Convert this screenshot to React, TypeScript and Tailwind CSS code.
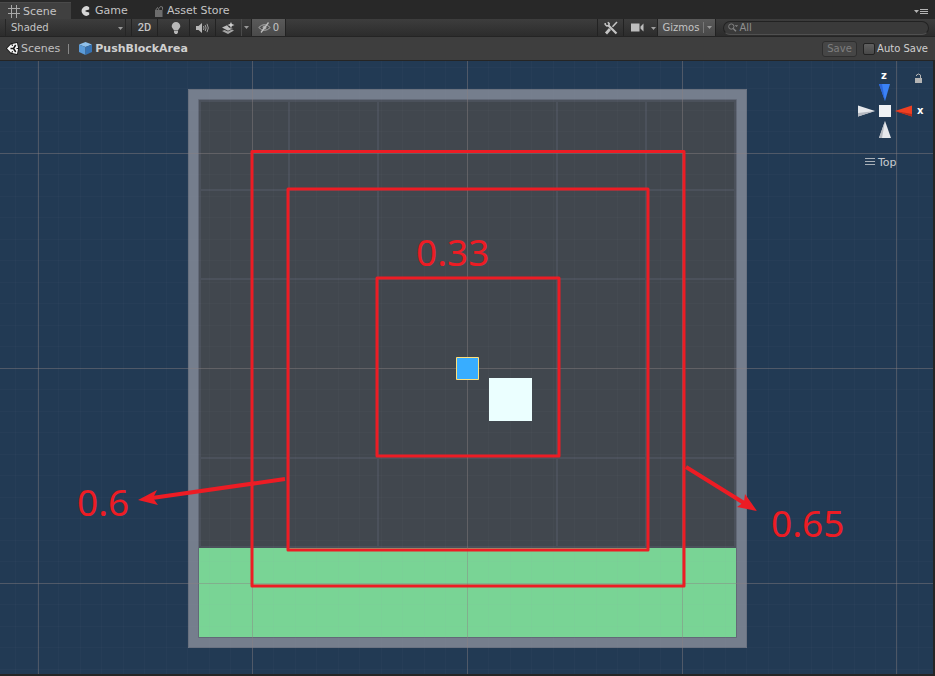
import type { ReactNode } from "react";

const MINOR_X = Array.from({ length: 44 }, (_, i) => 467.5 + (i - 21) * 21.5);
const MINOR_Y = Array.from({ length: 29 }, (_, i) => 368.5 + (i - 14) * 21.5);

function Caret({ className = "" }: { className?: string }) {
  return (
    <svg className={`shrink-0 ${className}`} width="5" height="3" viewBox="0 0 5 3" aria-hidden="true">
      <path d="M0 0h5L2.5 3z" fill="currentColor" />
    </svg>
  );
}

function GridIcon() {
  return (
    <svg width="14" height="13" viewBox="0 0 14 13" fill="none" stroke="#a8a8a8" aria-hidden="true">
      <path d="M4.5 0v13M9.5 0v13M1 3.5h12M1 8.5h12" />
    </svg>
  );
}

function GameIcon() {
  return (
    <svg width="10" height="10" viewBox="0 0 10 10" aria-hidden="true">
      <path d="M8.2 1.2A4.7 4.7 0 1 0 8.2 8.800L8.200 6.500 4.500 5.500V4.500L8.200 3.500z" fill="#d6d6d6" />
    </svg>
  );
}

function StoreIcon() {
  return (
    <svg width="10" height="11" viewBox="0 0 10 11" aria-hidden="true">
      <path d="M1.5 4.5L3.5 1.5 5 4M5 2.500L6.500.5 8.500 1v3" fill="none" stroke="#777" />
      <path d="M1 4h7v7H1z" fill="#6d6d6d" />
      <path d="M8 4l1-1v8H8z" fill="#4c4c4c" />
    </svg>
  );
}

function BulbIcon() {
  return (
    <svg width="10" height="12" viewBox="0 0 10 12" fill="#b8b8b8" aria-hidden="true">
      <path d="M5 0a4.300 4.300 0 0 1 4.300 4.300C9.300 6 7.800 6.500 7 8.500H3C2.200 6.500.7 6 .7 4.300A4.300 4.300 0 0 1 5 0zM3 9h4v1.500L6 12H4L3 10.500z" />
    </svg>
  );
}

function SpeakerIcon() {
  return (
    <svg width="13" height="10" viewBox="0 0 13 10" aria-hidden="true">
      <path d="M0 3h2.500L6 0v10L2.500 7H0z" fill="#b8b8b8" />
      <path d="M7.500 3q1 2 0 4M9.200 2q1.800 3 0 6M11 .8q2.600 4.200 0 8.400" fill="none" stroke="#a0a0a0" />
    </svg>
  );
}

function EffectsIcon() {
  return (
    <svg width="13" height="12" viewBox="0 0 13 12" aria-hidden="true">
      <path d="M0 9l2.500-1L6 9.600 10 7.500l2 1L6 12z" fill="#a5a5a5" />
      <path d="M0 5.500L5 3.200 7 5.500l2 1h2L6 8.800z" fill="#bcbcbc" />
      <path d="M9 0l.9 2 2.600 1-2.600 1L9 6.500 8 4 5.500 3 8 2z" fill="#cfcfcf" />
    </svg>
  );
}

function HiddenIcon() {
  return (
    <svg width="13" height="11" viewBox="0 0 13 11" fill="none" stroke="#a8a8a8" aria-hidden="true">
      <path d="M.7 5.500Q6.500-.3 12.300 5.500 6.500 11.300.7 5.500z" />
      <circle cx="6.500" cy="5.500" r="1.500" fill="#a8a8a8" />
      <path d="M3 10.500L10.500.5" stroke="#bdbdbd" strokeWidth="1.300" />
    </svg>
  );
}

function ToolsIcon() {
  return (
    <svg width="14" height="14" viewBox="0 0 14 14" fill="none" stroke="#c4c4c4" aria-hidden="true">
      <path d="M4 4l8.500 8.500" strokeWidth="2.200" />
      <path d="M1.200 2v1.500L2.800 5l2-.4.400-2L3.800 1.200" strokeWidth="1.500" />
      <path d="M13 1L8.500 5.800" strokeWidth="1.500" />
      <path d="M6 8l-4 4.500" strokeWidth="2.800" />
    </svg>
  );
}

function CameraIcon() {
  return (
    <svg width="13" height="9" viewBox="0 0 13 9" fill="#bdbdbd" aria-hidden="true">
      <path d="M0 .5h8.500v8H0zM9.500 3.500L12.500.5v8L9.500 5.500z" />
    </svg>
  );
}

function UnityIcon() {
  return (
    <svg width="13" height="13" viewBox="0 0 13 13" aria-hidden="true">
      <path d="M0 6.500L4.500 1.500 11.500 0 13 6.500 11.500 13 4.500 11.500z" fill="#161616" />
      <path
        d="M1 6.500L5 2.200 11 .9 12.200 6.500 11 12.100 5 10.800z"
        fill="#f4f4f4"
      />
      <path d="M7.500 6.500L4.500 6.500M7.500 6.500L9.700 3M7.500 6.500L9.700 10" stroke="#161616" strokeWidth="1.500" />
      <path d="M5.500 1L6.500 4M5.500 12l1-3M10.500 6.500H13" stroke="#161616" />
    </svg>
  );
}

function PrefabIcon() {
  return (
    <svg width="13" height="13" viewBox="0 0 13 13" aria-hidden="true">
      <path d="M6.500 0L13 2.500 6.500 5 0 2.500z" fill="#8fc0ea" />
      <path d="M0 2.500L6.500 5v8L0 10z" fill="#5b9bd8" />
      <path d="M13 2.500L6.500 5v8l6.500-3z" fill="#3672b2" />
    </svg>
  );
}

type ToolProps = { label: string; className: string; children: ReactNode };

function Tool({ label, className, children }: ToolProps) {
  return (
    <button
      aria-label={label}
      className={`flex h-full shrink-0 items-center justify-center border-r border-[#222] ${className}`}
    >
      {children}
    </button>
  );
}

function Tabs() {
  return (
    <nav className="flex h-[19px] items-end bg-[#282828] text-[11px] leading-4 text-[#c4c4c4]">
      <button className="flex h-[17px] w-[71px] items-center gap-[2px] border-t border-[#4a4a4a] bg-[#404040] pt-px pl-[7px]">
        <GridIcon />
        Scene
      </button>
      <button className="flex h-[17px] w-[73px] items-center gap-1 pt-px pl-[10px]">
        <GameIcon />
        Game
      </button>
      <button className="flex h-[17px] items-center gap-[3px] pt-px pl-[10px]">
        <StoreIcon />
        Asset Store
      </button>
      <button aria-label="Tab options" className="mr-[7px] ml-auto flex h-[15px] items-center gap-px text-[#b4b4b4]">
        <Caret />
        <svg width="8" height="5" viewBox="0 0 8 5" stroke="currentColor" aria-hidden="true">
          <path d="M0 .5h8M0 2.500h8M0 4.500h8" />
        </svg>
      </button>
    </nav>
  );
}

function Toolbar() {
  return (
    <div className="flex h-[18px] items-center border-b border-[#242424] bg-linear-to-b from-[#3d3d3d] to-[#2c2c2c] pr-[6px] pl-[5px] text-[10px] leading-4 text-[#c4c4c4]">
      <div className="relative h-full w-[121px] border-x border-[#262626]">
        <select
          aria-label="Draw mode"
          className="block h-full w-full appearance-none bg-transparent pt-px pl-[5px] text-[10px] leading-4"
        >
          <option>Shaded</option>
        </select>
        <Caret className="pointer-events-none absolute top-2 right-[2px] text-[#999]" />
      </div>
      <Tool label="2D" className="ml-[5px] w-[27px] border-l">
        <span className="pt-px font-[Roboto,sans-serif] text-[11px] font-medium">2D</span>
      </Tool>
      <Tool label="Lighting" className="ml-[5px] w-[27px]">
        <BulbIcon />
      </Tool>
      <Tool label="Audio" className="w-[26px]">
        <SpeakerIcon />
      </Tool>
      <Tool label="Effects" className="w-[26px] border-r-[#4a4a4a]">
        <EffectsIcon />
      </Tool>
      <Tool label="Effects menu" className="w-[10px] text-[#999]">
        <Caret />
      </Tool>
      <Tool label="Hidden objects" className="w-[34px] gap-[2px] bg-linear-to-b from-[#5a5a5a] to-[#4a4a4a]">
        <HiddenIcon />
        <span className="pt-px">0</span>
      </Tool>
      <div className="min-w-0 flex-1" />
      <Tool label="Tools" className="w-[27px] border-l">
        <ToolsIcon />
      </Tool>
      <Tool label="Camera" className="w-[34px] gap-[7px] pl-[5px] text-[#a0a0a0]">
        <CameraIcon />
        <Caret className="mt-[2px]" />
      </Tool>
      <Tool label="Gizmos" className="w-[58px] gap-1 bg-linear-to-b from-[#5a5a5a] to-[#484848] pl-[2px]">
        <span className="pt-px">Gizmos</span>
        <span className="flex h-[11px] items-center border-l border-[#777] pl-[3px] text-[#999]">
          <Caret />
        </span>
      </Tool>
      <label className="ml-[7px] flex h-[14px] w-[206px] items-center gap-px rounded-full border border-[#222] border-b-[#505050] bg-[#3a3a3a] pl-1 text-[#909090]">
        <svg width="11" height="9" viewBox="0 0 11 9" fill="none" stroke="#858585" aria-hidden="true">
          <circle cx="3.500" cy="3.500" r="2.800" />
          <path d="M5.500 5.500L8.500 8.500" strokeWidth="1.400" />
          <path d="M7 2h4L9 4z" fill="#858585" stroke="none" />
        </svg>
        <input
          aria-label="Search"
          defaultValue="All"
          className="w-full min-w-0 bg-transparent text-[10px] leading-3 outline-none"
        />
      </label>
    </div>
  );
}

function Breadcrumb() {
  return (
    <div className="flex h-[23px] items-center bg-[#3e3e3e] pr-[7px] pl-[6px] text-[11px] leading-4 text-[#c0c0c0]">
      <a href="#scenes" className="flex items-center gap-[2px]">
        <UnityIcon />
        <span className="pt-px">Scenes</span>
      </a>
      <span className="ml-[8px] h-[10px] w-px bg-[#888]" />
      <span className="ml-[10px] flex items-center gap-[3px] font-bold text-[#d0d0d0]">
        <PrefabIcon />
        <span className="pt-px">PushBlockArea</span>
      </span>
      <button
        disabled
        className="mr-[6px] ml-auto h-4 w-[35px] rounded-[3px] border border-[#2e2e2e] bg-[#464646] text-[10px] leading-3 text-[#7e7e7e]"
      >
        Save
      </button>
      <label className="flex items-center gap-[2px] text-[10px] text-[#d0d0d0]">
        <input
          type="checkbox"
          className="size-3 appearance-none rounded-[2px] border border-[#222] bg-linear-to-b from-[#606060] to-[#484848]"
        />
        Auto Save
      </label>
    </div>
  );
}

function GridLines() {
  return (
    <g fill="none">
      <g stroke="#8fa0ae" strokeOpacity="0.04">
        {MINOR_X.map((x) => (
          <path key={x} d={`M${Math.round(x) - 0.5} 61V674`} />
        ))}
        {MINOR_Y.map((y) => (
          <path key={y} d={`M0 ${Math.round(y) - 0.5}H933`} />
        ))}
      </g>
      <path
        d="M38.500 61V674M252.500 61V674M467.500 61V674M682.500 61V674M896.500 61V674M0 153.500H933M0 368.500H933M0 583.500H933"
        stroke="#8a8080"
        strokeOpacity="0.42"
      />
    </g>
  );
}

function PushBlockArea() {
  return (
    <g>
      <path d="M188 89h559v559H188z" fill="#757e8d" />
      <path d="M188.500 89.500h558v558h-558z" fill="none" stroke="#69717f" />
      <path d="M199 100h537v448H199z" fill="#41474e" />
      <path
        d="M200 101h535v446H200zM289 101v446M378 101v446M557 101v446M646 101v446M200 190h535M200 279h535M200 458h535"
        fill="none"
        stroke="#4b515b"
        strokeWidth="2"
      />
      <path d="M199 548h537v89H199z" fill="#79d495" />
      <path d="M198.500 99.500h538v538h-538z" fill="none" stroke="#626977" />
    </g>
  );
}

function Annotations() {
  return (
    <g>
      <g fill="none" stroke="#ed1c24" strokeWidth="3" strokeLinejoin="round">
        <path d="M252 151.500h432V586H252z" />
        <path d="M288 189h360v361H288z" />
        <path d="M377 278h182v178H377z" />
        <path d="M285 479L152 498M686 467L744 503" strokeWidth="4" />
      </g>
      <path d="M138 500L157 490 153 498 158 505zM757 511L745 494 744 502 737 507z" fill="#ed1c24" />
      <g fill="#ed1c24" className="font-[Noto_Sans,sans-serif] text-[37px]">
        <text x="416" y="266">0.33</text>
        <text x="77" y="516">0.6</text>
        <text x="771" y="537">0.65</text>
      </g>
    </g>
  );
}

function OrientationGizmo() {
  return (
    <g>
      <path d="M879 84h11l-5 17z" fill="#3b82f6" />
      <path d="M879 84h3l3 17z" fill="#2c66d8" />
      <path d="M858 105.500v11L875 111z" fill="#e6e8ec" />
      <path d="M858 113v3.500L875 111z" fill="#b4b8c0" />
      <path d="M912 105.500v11L895 111z" fill="#f04022" />
      <path d="M912 114v2.500L895 111z" fill="#b92d1b" />
      <path d="M885 121l6 17h-12z" fill="#e6e8ec" />
      <path d="M885 121l-3 17h-3z" fill="#b4b8c0" />
      <path d="M879 105h12v12h-12z" fill="#f0f2f4" />
      <g fill="#fff" className="text-[10px] font-bold">
        <text x="881" y="79">z</text>
        <text x="917" y="114">x</text>
      </g>
      <path d="M915 78h7v5h-7z" fill="#b4b4b4" />
      <path d="M916.500 76v-1q2-2 4 0v3" fill="none" stroke="#b4b4b4" />
      <path d="M865 158.500h10M865 161.500h10M865 164.500h10" stroke="#a9b0b8" />
      <text x="878" y="166" fill="#c8ccd0" className="text-[11px]">Top</text>
    </g>
  );
}

function SceneView() {
  return (
    <main className="border-t border-r-2 border-b-2 border-[#252525] bg-[#223a54]">
      <svg className="block h-auto w-full" viewBox="0 61 933 613" role="img" aria-label="Scene view">
        <PushBlockArea />
        <GridLines />
        <path d="M456.500 357.500h22v22h-22z" fill="#38adff" stroke="#ffe07a" />
        <path d="M489 378h43v43h-43z" fill="#ebffff" />
        <Annotations />
        <OrientationGizmo />
      </svg>
    </main>
  );
}

export default function App() {
  return (
    <div className="min-h-screen bg-[#252525] font-[DejaVu_Sans,sans-serif]">
      <Tabs />
      <Toolbar />
      <Breadcrumb />
      <SceneView />
    </div>
  );
}
